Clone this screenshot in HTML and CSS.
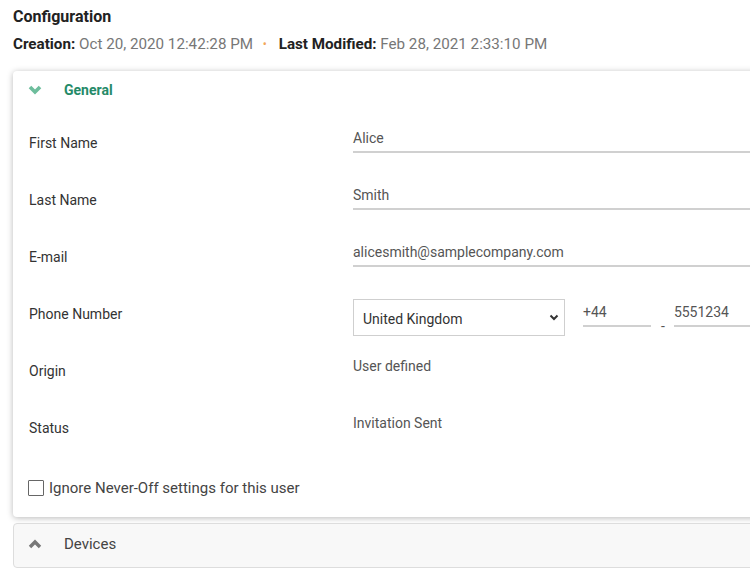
FILE: index.html
```html
<!DOCTYPE html>
<html>
<head>
<meta charset="utf-8">
<link rel="stylesheet" href="styles.css">
</head>
<body>
<div class="page">
  <div class="head">
    <div class="title">Configuration</div>
    <div class="meta">
      <b>Creation:</b> <span class="val">Oct 20, 2020 12:42:28 PM</span>
      <span class="dot">•</span>
      <b>Last Modified:</b> <span class="val">Feb 28, 2021 2:33:10 PM</span>
    </div>
  </div>

  <div class="card">
    <div class="card-head">
      <svg class="chev" width="14" height="10" viewBox="0 0 14 10"><polyline points="2,2 7,7 12,2" fill="none" stroke="#6dbd9c" stroke-width="3.6" stroke-linecap="butt" stroke-linejoin="miter"/></svg>
      <span class="card-title">General</span>
    </div>
    <div class="form">
      <div class="row">
        <div class="label">First Name</div>
        <div class="field"><div class="input">Alice</div></div>
      </div>
      <div class="row">
        <div class="label">Last Name</div>
        <div class="field"><div class="input">Smith</div></div>
      </div>
      <div class="row">
        <div class="label">E-mail</div>
        <div class="field"><div class="input">alicesmith@samplecompany.com</div></div>
      </div>
      <div class="row">
        <div class="label">Phone Number</div>
        <div class="field phone">
          <div class="select">
            <span>United Kingdom</span>
            <svg width="10" height="7" viewBox="0 0 10 7"><polyline points="1.5,1.5 5,5 8.5,1.5" fill="none" stroke="#333" stroke-width="2"/></svg>
          </div>
          <div class="input small code">+44</div>
          <span class="dash">-</span>
          <div class="input small num">5551234</div>
        </div>
      </div>
      <div class="row">
        <div class="label">Origin</div>
        <div class="field"><div class="text">User defined</div></div>
      </div>
      <div class="row">
        <div class="label">Status</div>
        <div class="field"><div class="text">Invitation Sent</div></div>
      </div>
      <label class="check">
        <span class="box"></span>
        <span>Ignore Never-Off settings for this user</span>
      </label>
    </div>
  </div>

  <div class="card collapsed">
    <div class="card-head">
      <svg class="chev" width="14" height="10" viewBox="0 0 14 10"><polyline points="2,8 7,3 12,8" fill="none" stroke="#777" stroke-width="3.4"/></svg>
      <span class="card-title grey">Devices</span>
    </div>
  </div>
</div>
</body>
</html>
```

FILE: styles.css
```css
html, body {
  margin: 0;
  padding: 0;
  overflow: hidden;
  background: #fff;
}
body {
  font-family: Roboto, "Liberation Sans", sans-serif;
  font-size: 14px;
  color: #333;
}
.page {
  width: 800px;
  padding: 8px 0 0 13px;
}
.head {
  padding-bottom: 18px;
}
.title {
  font-size: 16px;
  font-weight: 700;
  line-height: 18px;
  color: #222;
}
.meta {
  margin-top: 9px;
  font-size: 15.2px;
  line-height: 18px;
  color: #222;
}
.meta b {
  font-weight: 700;
}
.meta .val {
  color: #777;
}
.meta .dot {
  color: #f2a65a;
  font-size: 12px;
  margin: 0 8px 0 6px;
  vertical-align: 1px;
}
.card {
  background: #fff;
  border-radius: 4px;
  box-shadow: 0 1px 6px rgba(0, 0, 0, 0.28);
  width: 780px;
}
.card-head {
  height: 38px;
  display: flex;
  align-items: center;
  padding-left: 15px;
}
.chev {
  margin-right: 22px;
}
.card-title {
  font-weight: 700;
  color: #258a68;
}
.card-title.grey {
  font-weight: 400;
  font-size: 15px;
  color: #444;
}
.form {
  padding: 6px 0 19px 16px;
}
.row {
  height: 57px;
  display: flex;
}
.label {
  width: 324px;
  flex: none;
  padding-top: 18px;
  line-height: 20px;
  color: #333;
}
.field {
  flex: 1;
  padding-top: 13px;
}
.input {
  line-height: 20px;
  padding-bottom: 3px;
  border-bottom: 2px solid #d0d0d0;
  color: #555;
}
.text {
  line-height: 20px;
  color: #555;
}
.phone {
  display: flex;
  align-items: flex-start;
}
.select {
  height: 35px;
  border: 1px solid #cfcfcf;
  display: flex;
  align-items: center;
  justify-content: space-between;
  padding: 0 5px 0 9px;
  box-sizing: content-box;
  width: 196px;
  color: #333;
}
.select span {
  padding-top: 2px;
}
.input.small {
  margin-top: 3px;
}
.code {
  width: 68px;
  margin-left: 18px;
}
.dash {
  line-height: 20px;
  margin: 17px 9px 0 10px;
  color: #555;
}
.num {
  flex: 1;
}
.check {
  display: flex;
  align-items: center;
  margin-top: 21px;
  height: 20px;
  font-size: 15px;
  color: #444;
}
.box {
  width: 14px;
  height: 14px;
  border: 1px solid #666;
  margin: 0 5px 0 -1px;
  border-radius: 1px;
}
.collapsed {
  margin-top: 6px;
  background: #f8f8f8;
  border: 1px solid #ddd;
  box-shadow: none;
  box-sizing: border-box;
}
.collapsed .card-head {
  height: 39px;
  padding-bottom: 4px;
  padding-left: 14px;
}
```
